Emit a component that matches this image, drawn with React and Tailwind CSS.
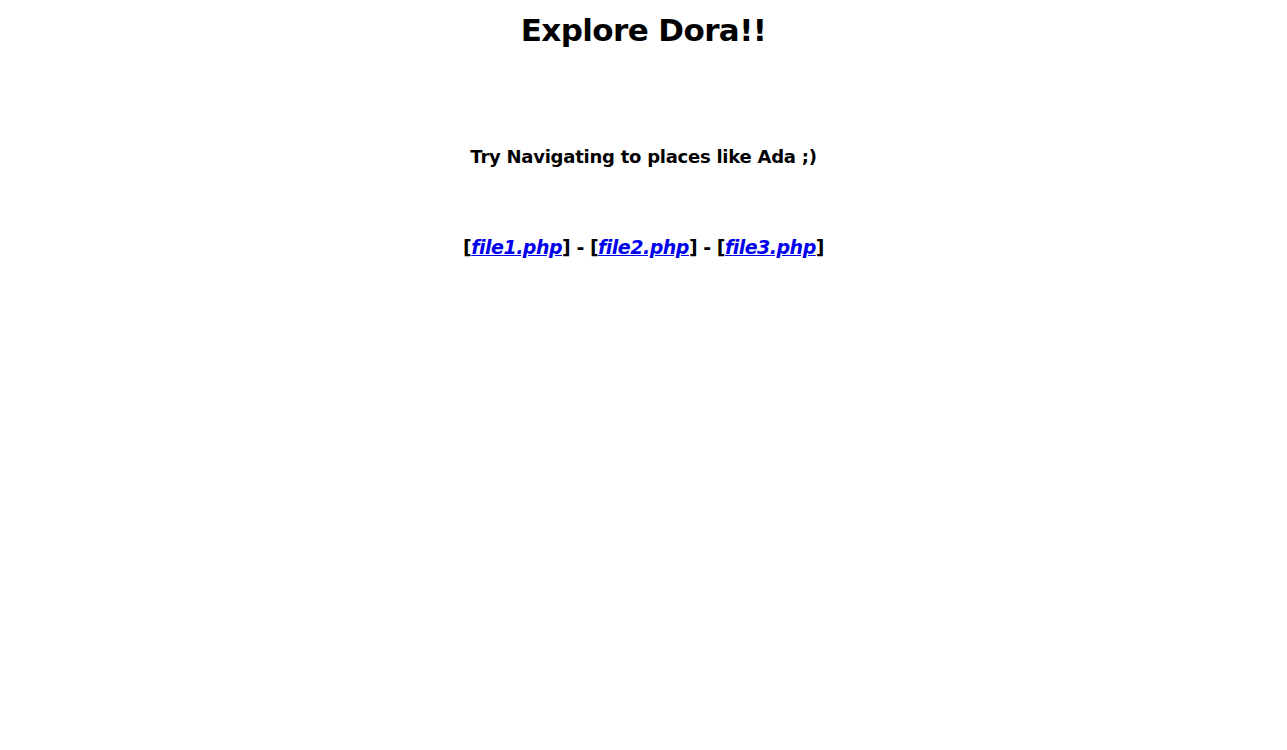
export default function App() {
  return (
    <div className="min-h-screen bg-white text-black text-center">
      <div className="pt-[10px] font-['DejaVu_Sans',sans-serif]">
        <h1 className="text-[31px] font-bold leading-[40px] tracking-[-0.6px] m-0">Explore Dora!!</h1>
        <h3 className="mt-[94px] text-[18px] font-bold leading-[26px] tracking-[-0.25px]">Try Navigating to places like Ada ;)</h3>
        <p className="mt-[63px] text-[19px] font-bold leading-[28px] tracking-[-0.5px]">
          [<a href="#" className="text-[#0000ee] underline italic">file1.php</a>] - [<a href="#" className="text-[#0000ee] underline italic">file2.php</a>] - [<a href="#" className="text-[#0000ee] underline italic">file3.php</a>]
        </p>
      </div>
    </div>
  );
}
